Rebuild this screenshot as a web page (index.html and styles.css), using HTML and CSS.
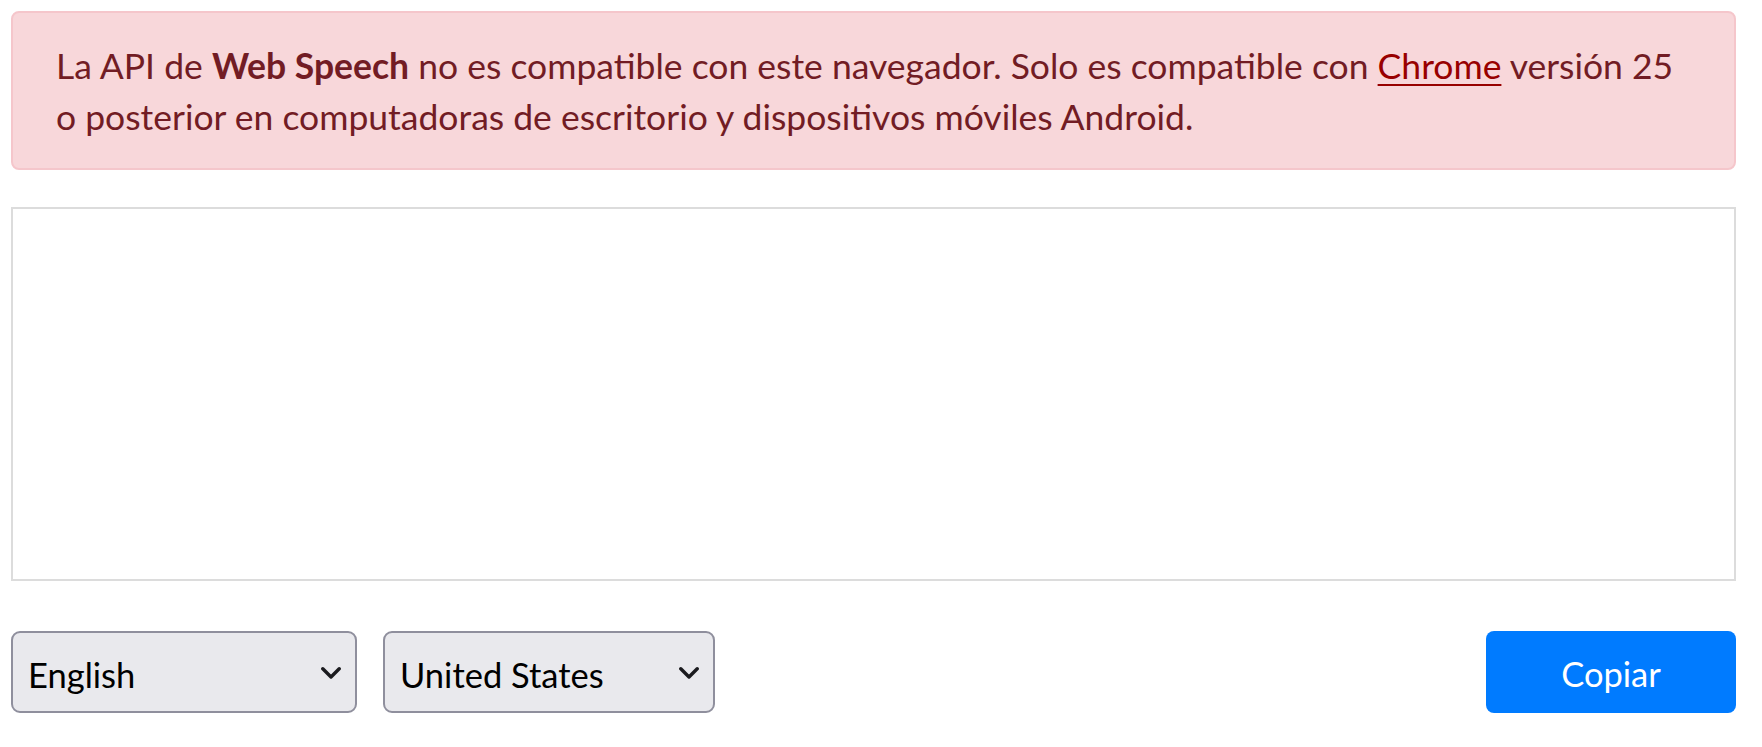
FILE: index.html
```html
<!DOCTYPE html>
<html lang="es">
<head>
<meta charset="utf-8">
<title>Dictado por voz</title>
<link rel="stylesheet" href="styles.css">
</head>
<body>
<main class="page">
  <div class="alert" role="alert">
    La API de <strong>Web Speech</strong> no es compatible con este navegador. Solo es compatible con <a class="alert-link" href="#">Chrome</a> versión 25 o posterior en computadoras de escritorio y dispositivos móviles Android.
  </div>

  <textarea class="transcript" aria-label="Transcripción"></textarea>

  <div class="controls">
    <div class="select-wrap select-lang">
      <select class="select">
        <option>English</option>
      </select>
      <svg class="chevron" viewBox="0 0 20 12" aria-hidden="true"><path d="M1.8 1.8 L10 10 L18.2 1.8" fill="none" stroke="#1b1b1f" stroke-width="3.4" stroke-linecap="round" stroke-linejoin="round"/></svg>
    </div>
    <div class="select-wrap select-region">
      <select class="select">
        <option>United States</option>
      </select>
      <svg class="chevron" viewBox="0 0 20 12" aria-hidden="true"><path d="M1.8 1.8 L10 10 L18.2 1.8" fill="none" stroke="#1b1b1f" stroke-width="3.4" stroke-linecap="round" stroke-linejoin="round"/></svg>
    </div>
    <button class="btn-copy" type="button">Copiar</button>
  </div>
</main>
</body>
</html>
```
FILE: styles.css
```css
html, body {
  margin: 0;
  padding: 0;
  background: #ffffff;
}

body {
  font-family: "Lato", "Noto Sans", sans-serif;
}

.page {
  padding: 11px 26px 0 11px;
  display: flex;
  flex-direction: column;
}

.alert {
  box-sizing: border-box;
  background: #f8d7da;
  border: 2px solid #f5c6cb;
  border-radius: 8px;
  color: #721c24;
  font-size: 35.5px;
  line-height: 51px;
  padding: 27px 43px 26px 43px;
}

.alert strong {
  font-weight: 700;
}

.alert-link {
  color: #980000;
  text-decoration: underline;
  text-decoration-thickness: 2px;
  text-underline-offset: 5px;
}

.transcript {
  display: block;
  box-sizing: border-box;
  margin: 37px 0 0 0;
  width: 100%;
  height: 374px;
  border: 2px solid #dcdcdc;
  border-radius: 0;
  background: #ffffff;
  resize: none;
  outline: none;
  font-family: "Lato", sans-serif;
  font-size: 34px;
  padding: 8px 12px;
}

.controls {
  display: flex;
  align-items: center;
  gap: 26px;
  margin-top: 50px;
}

.select-wrap {
  position: relative;
  height: 82px;
}

.select-lang {
  width: 346px;
}

.select-region {
  width: 332px;
}

.select {
  appearance: none;
  -webkit-appearance: none;
  box-sizing: border-box;
  width: 100%;
  height: 82px;
  margin: 0;
  background: #e9e9ed;
  border: 2px solid #8f8f9d;
  border-radius: 9px;
  color: #000000;
  font-family: "Lato", sans-serif;
  font-size: 34.5px;
  padding: 5px 50px 0 15px;
}

.chevron {
  position: absolute;
  right: 16px;
  top: 36px;
  width: 20px;
  height: 12px;
  pointer-events: none;
}

.btn-copy {
  margin-left: auto;
  box-sizing: border-box;
  width: 250px;
  height: 82px;
  background: #007bff;
  border: none;
  border-radius: 8px;
  color: #ffffff;
  font-family: "Lato", sans-serif;
  font-size: 34.5px;
  padding: 3px 0 0 0;
  cursor: pointer;
}
```
